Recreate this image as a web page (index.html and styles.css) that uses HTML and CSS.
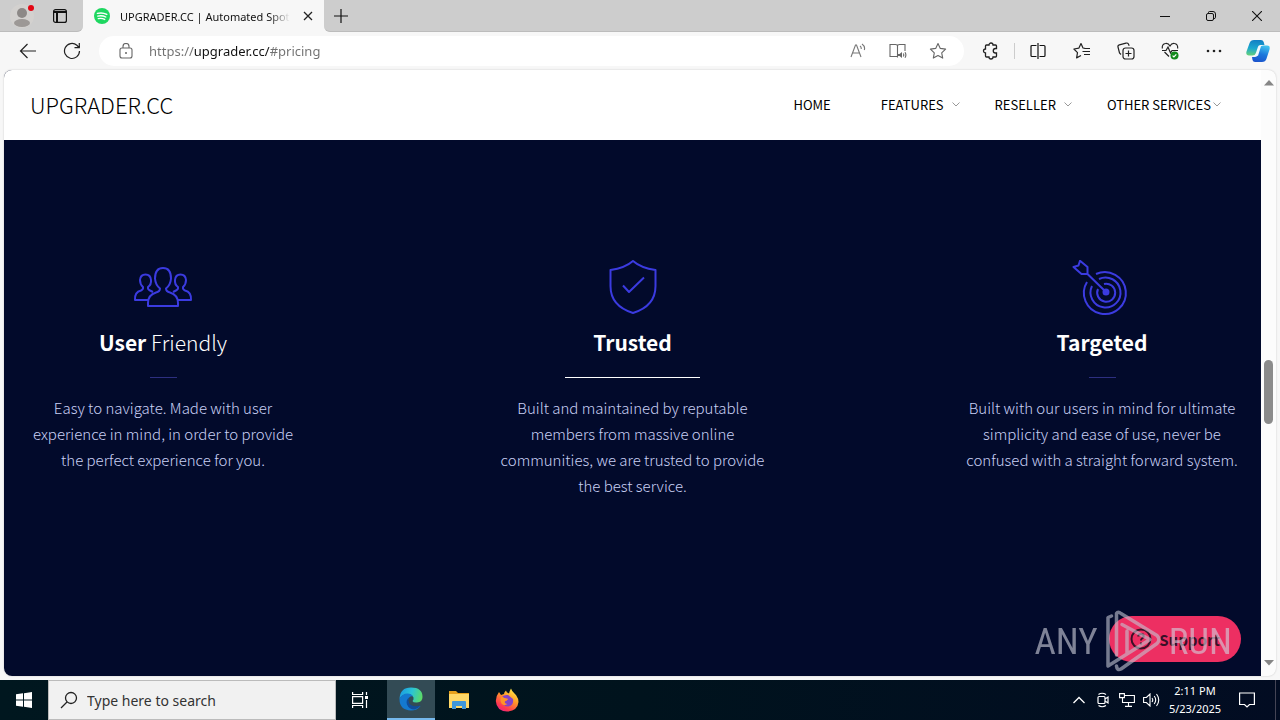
FILE: index.html
```html
<!DOCTYPE html>
<html lang="en">
<head>
  <meta charset="UTF-8">
  <meta name="viewport" content="width=device-width, initial-scale=1.0">
  <title>UPGRADER.CC | Automated Spotify Upgrades</title>
  <link rel="stylesheet" href="styles.css">
</head>
<body>

  <!-- Tab strip -->
  <div class="titlebar">
    <div class="titlebar-left">
      <button type="button" class="profile" aria-label="Profile">
        <svg width="28" height="28" viewBox="0 0 28 28">
          <circle cx="13" cy="14" r="12" fill="#d3d1cf"/>
          <circle cx="13" cy="11" r="5" fill="#8d8987"/>
          <ellipse cx="13" cy="21" rx="8" ry="4" fill="#9c9896"/>
          <circle cx="22" cy="6" r="3" fill="#e30613"/>
        </svg>
      </button>
      <button type="button" class="workspace" aria-label="Tab actions">
        <svg width="16" height="16" viewBox="0 0 16 16" fill="none" stroke="#111" stroke-width="1.2">
          <rect x="1.6" y="1.6" width="12.8" height="12.8" rx="2"/>
          <path d="M2 4h12M5 4v10" stroke-width="2"/>
        </svg>
      </button>
    </div>
    <div class="tab">
      <svg width="16" height="16" viewBox="0 0 16 16">
        <circle cx="8" cy="8" r="8" fill="#1ed760"/>
        <path d="M3.4 5.4q5-1.3 9.4 1M3.8 8.1q4.300-1 8 .9M4.300 10.600q3.500-.8 6.400.8" fill="none" stroke="#fff" stroke-width="1.400" stroke-linecap="round"/>
      </svg>
      <span class="tab-title">UPGRADER.CC | Automated Spot</span>
      <button type="button" class="tab-close" aria-label="Close tab">
        <svg width="10" height="10" viewBox="0 0 10 10" stroke="#222" stroke-width="1.300"><path d="M1 1l8 8M9 1l-8 8"/></svg>
      </button>
    </div>
    <button type="button" class="new-tab" aria-label="New tab">
      <svg width="14" height="14" viewBox="0 0 14 14" stroke="#111" stroke-width="1.200"><path d="M7 0v14M0 7h14"/></svg>
    </button>
    <div class="window-buttons">
      <button type="button" aria-label="Minimize"><svg width="10" height="10" viewBox="0 0 10 10" stroke="#111"><path d="M0 5.500h10"/></svg></button>
      <button type="button" aria-label="Restore">
        <svg width="10" height="10" viewBox="0 0 10 10" fill="none" stroke="#111">
          <rect x=".5" y="2.500" width="7" height="7" rx="1.500"/>
          <path d="M2.500 2V1.500q0-1 1-1H7Q9.500.5 9.500 3v3.500q0 1-1.500 1"/>
        </svg>
      </button>
      <button type="button" aria-label="Close"><svg width="10" height="10" viewBox="0 0 10 10" stroke="#111" stroke-width="1.100"><path d="M0 0l10 10M10 0L0 10"/></svg></button>
    </div>
  </div>

  <!-- Toolbar -->
  <div class="toolbar">
    <button type="button" aria-label="Back">
      <svg width="18" height="16" viewBox="0 0 18 16" fill="none" stroke="#222" stroke-width="1.200"><path d="M17 8H2M8.500 1L1.500 8l7 7"/></svg>
    </button>
    <button type="button" aria-label="Refresh">
      <svg width="18" height="18" viewBox="0 0 18 18" fill="none" stroke="#222" stroke-width="1.200"><path d="M16.500 9a7.500 7.500 0 1 1-2.600-5.700L16 5.500M16.300 1v4.700h-4.800"/></svg>
    </button>
    <div class="address">
      <svg width="14" height="16" viewBox="0 0 14 16" fill="none" stroke="#666" stroke-width="1.100">
        <rect x="1" y="5" width="12" height="10" rx="2"/>
        <path d="M4 5V3.500a3 3 0 0 1 6 0V5"/>
        <circle cx="7" cy="10" r="1" fill="#666" stroke="none"/>
      </svg>
      <input type="text" class="url" aria-label="Address" value="https://upgrader.cc/#pricing">
      <button type="button" aria-label="Read aloud">
        <svg width="16" height="16" viewBox="0 0 16 16" fill="none" stroke="#777" stroke-width="1.100"><path d="M1 14L5.500 2h1L11 14M2.700 10h6.600M10 3q1.500 1 1.200 3M12 1q3.500 2.500 2.300 6"/></svg>
      </button>
      <button type="button" aria-label="Immersive reader">
        <svg width="18" height="16" viewBox="0 0 18 16" fill="none" stroke="#666" stroke-width="1.100">
          <path d="M8.500 3v11.500M8 13.500H1v-12h5.500q2 0 2 1.500 0-1.500 2-1.500H16V8"/>
          <path d="M9 11h1.500L13 9v6l-2.500-2H9z" fill="#666" stroke="none"/>
          <path d="M14.300 10.500q1 1.500 0 3M16 9.300q1.800 2.700 0 5.400"/>
        </svg>
      </button>
      <button type="button" aria-label="Add to favorites">
        <svg width="18" height="18" viewBox="0 0 18 18" fill="none" stroke="#666" stroke-width="1.100" stroke-linejoin="round"><path d="M9 1.500l2.300 4.900 5.300.7-3.900 3.700 1 5.300L9 13.500l-4.700 2.600 1-5.300L1.400 7.100l5.300-.7z"/></svg>
      </button>
    </div>
    <button type="button" aria-label="Extensions">
      <svg width="18" height="18" viewBox="0 0 18 18" fill="none" stroke="#222" stroke-width="1.300"><path d="M4.500 3H7a2 2 0 0 1 4 0h2.500q1 0 1 1v2.500h-1a2 2 0 0 0 0 4.500h1v3q0 1-1 1H11a2 2 0 0 1-4 0H4.500q-1 0-1-1V11a2 2 0 0 1 0-4V4q0-1 1-1z"/></svg>
    </button>
    <span class="divider"></span>
    <button type="button" aria-label="Split screen">
      <svg width="16" height="16" viewBox="0 0 16 16" fill="none" stroke="#111" stroke-width="1.200"><path d="M6.500 2.500H2q-1 0-1 1v9q0 1 1 1h4.500M9.500 2.500H14q1 0 1 1v9q0 1-1 1H9.500M8 0v16"/></svg>
    </button>
    <button type="button" aria-label="Favorites">
      <svg width="18" height="18" viewBox="0 0 18 18" fill="none" stroke="#222" stroke-width="1.200" stroke-linejoin="round"><path d="M12 6.400L10 6 8 1.500 5.800 6.200.9 7l3.600 3.700-.9 5.200L8 13.500M11 6.500h6M9.500 9.500H17M11 12.500h6"/></svg>
    </button>
    <button type="button" aria-label="Collections">
      <svg width="18" height="18" viewBox="0 0 18 18" fill="none" stroke="#222" stroke-width="1.200"><rect x="6" y="6" width="11" height="11" rx="2.500"/><path d="M11.500 8.500v6M8.500 11.500h6M4 12.500L2.500 11 1 5q-.4-1.700 1.300-2.200L9 1.100q1.700-.4 2.400 1l.8 1.700"/></svg>
    </button>
    <button type="button" aria-label="Browser essentials">
      <svg width="18" height="18" viewBox="0 0 18 18" fill="none" stroke="#222" stroke-width="1.200">
        <path d="M1.300 6.500Q.8 2 4.500 1.500 7.300 1 9 4q1.700-3 4.500-2.500 3.500.5 3.200 5M3.500 10L8 14.500M1 8.500h4L7 5l2.500 6 1.500-2.500h6"/>
        <circle cx="13.500" cy="13.500" r="4" fill="#138a1c" stroke="none"/>
        <path d="M11.600 13.600l1.300 1.300 2.400-2.600" stroke="#fff"/>
      </svg>
    </button>
    <button type="button" aria-label="Settings and more">
      <svg width="16" height="4" viewBox="0 0 16 4" fill="#222"><circle cx="2" cy="2" r="1.300"/><circle cx="8" cy="2" r="1.300"/><circle cx="14" cy="2" r="1.300"/></svg>
    </button>
    <button type="button" aria-label="Copilot">
      <svg width="24" height="24" viewBox="0 0 24 24">
        <defs>
          <linearGradient id="copilotA" x1="0.500" y1="0" x2="0.400" y2="1"><stop offset="0" stop-color="#117fc4"/><stop offset=".55" stop-color="#1ba8cf"/><stop offset="1" stop-color="#63d07c"/></linearGradient>
          <linearGradient id="copilotB" x1="0.600" y1="0" x2="0.300" y2="1"><stop offset="0" stop-color="#3fc0ee"/><stop offset=".5" stop-color="#1b78dc"/><stop offset="1" stop-color="#1b53cc"/></linearGradient>
        </defs>
        <path d="M8 1h7q2 0 2.700 2l.8 3h-4q-2 0-2.600 2l-2 6q-.8 2.500-3.500 2.500H3q-3.500 0-2.500-4L3.600 4Q4.600 1 8 1z" fill="url(#copilotA)"/>
        <path d="M16 23H9q-2 0-2.500-2L6 18h3q2 0 2.600-2l2-7q.8-2.500 3.500-2.500H21q3.500 0 2.500 4L20.400 20q-1 3-4.400 3z" fill="url(#copilotB)"/>
        <path d="M13 7l2 .2-3 9.500-2.500.3z" fill="#eefaff"/>
      </svg>
    </button>
  </div>

  <!-- Web page -->
  <div class="viewport">
    <div class="page">
      <header class="site-header">
        <a href="#" class="logo">UPGRADER.CC</a>
        <nav>
          <a href="#" class="home">HOME</a>
          <a href="#">FEATURES <svg class="chevron" width="8" height="5" viewBox="0 0 8 5"><path d="M.5.500L4 4 7.500.500"/></svg></a>
          <a href="#">RESELLER <svg class="chevron" width="8" height="5" viewBox="0 0 8 5"><path d="M.5.500L4 4 7.500.500"/></svg></a>
          <a href="#" class="services">OTHER SERVICES <svg class="chevron" width="8" height="5" viewBox="0 0 8 5"><path d="M.5.500L4 4 7.500.500"/></svg></a>
        </nav>
      </header>

      <main class="features">
        <section class="feature">
          <svg class="feature-icon" width="60" height="60" viewBox="0 0 60 60">
            <path d="M15 46V43q0-8 8-10.500 4-1 4-4-4.500-3.500-5-10Q22 8 30 8t8 10.500q-.5 6.500-5 10 0 3 4 4 8 2.500 8 10.500v3z"/>
            <path d="M15 40H2q-.5-8 6-9.500Q10.500 29.500 10 27 7 24.500 7 20q.5-5.500 5.500-5.500T18 20q.5 4.500-3 7-.5 2.500 2 3.500l3 1.500M45 40h13q.5-8-6-9.500-2.500-1-2-3.500 3-2.500 3-7-.5-5.500-5.500-5.500T42 20q-.5 4.500 3 7 .5 2.500-2 3.500l-3 1.500"/>
          </svg>
          <h3>User <span>Friendly</span></h3>
          <hr>
          <p>Easy to navigate. Made with user experience in mind, in order to provide the perfect experience for you.</p>
        </section>

        <section class="feature">
          <svg class="feature-icon" width="60" height="60" viewBox="0 0 60 60">
            <path d="M30 1q8 7 22.500 9v16q0 20-22.500 27Q7.500 46 7.500 26V10Q22 8 30 1z"/>
            <path d="M20 25.500l6 6.500L41 17.500"/>
          </svg>
          <h3>Trusted</h3>
          <hr class="wide">
          <p>Built and maintained by reputable members from massive online communities, we are trusted to provide the best service.</p>
        </section>

        <section class="feature">
          <svg class="feature-icon" width="60" height="60" viewBox="0 0 60 60">
            <path d="M24 14A21 21 0 1 1 15 22M27 19A15 15 0 1 1 20 26M32 24A9 9 0 1 1 26 29"/>
            <circle cx="34" cy="32" r="2.500" fill="#3b3be0"/>
            <path d="M34 32L15.500 14M15.500 14L9.500 14 1.500 7l5-1.500L8 .8l7.500 6.200z"/>
          </svg>
          <h3>Targeted</h3>
          <hr>
          <p>Built with our users in mind for ultimate simplicity and ease of use, never be confused with a straight forward system.</p>
        </section>
      </main>

      <button type="button" class="support">
        <svg width="22" height="22" viewBox="0 0 22 22" fill="none" stroke="#3c1027" stroke-width="2">
          <circle cx="11" cy="11" r="9.500"/>
          <path d="M8.300 8.500q.2-2.500 2.700-2.500 2.700 0 2.700 2.200 0 1.300-1.700 2.300-1 .7-1 2M11 14.500v2"/>
        </svg>
        Support
      </button>
    </div>

    <div class="scrollbar">
      <svg width="10" height="6" viewBox="0 0 10 6"><path d="M5 0l5 5.500H0z" fill="#868686"/></svg>
      <div class="thumb"></div>
      <svg width="10" height="6" viewBox="0 0 10 6"><path d="M0 0h10L5 5.500z" fill="#868686"/></svg>
    </div>
  </div>

  <!-- Sandbox watermark -->
  <div class="watermark">
    <span>ANY</span>
    <svg width="57" height="64" viewBox="0 0 57 64" fill="none" stroke="#c3c6d3" stroke-width="3.500" stroke-linejoin="round" stroke-linecap="round">
      <path d="M11.500 46V4.500Q13 2 16 4.500L52 26.500Q56 30.500 52 34.500L16 60q-4 2-4.500-3"/>
      <path d="M17 15.500L45 30.500 3 57V8.500L6.500 7M22 22V44"/>
    </svg>
    <span>RUN</span>
  </div>

  <!-- Taskbar -->
  <footer class="taskbar">
    <button type="button" class="start" aria-label="Start">
      <svg width="16" height="16" viewBox="0 0 16 16" fill="#fff"><path d="M0 2.300L7 1.300V7.500H0zM8 1.200L16 0v7.500H8zM0 8.500h7v6.200l-7-1zM8 8.500h8V16l-8-1.200z"/></svg>
    </button>
    <label class="search">
      <svg width="18" height="18" viewBox="0 0 18 18" fill="none" stroke="#222" stroke-width="1.300"><circle cx="11" cy="7" r="5.500"/><path d="M7 11L1 17"/></svg>
      <input type="text" placeholder="Type here to search" aria-label="Type here to search">
    </label>
    <button type="button" class="app task-view" aria-label="Task view">
      <svg width="18" height="16" viewBox="0 0 18 16" fill="none" stroke="#fff" stroke-width="1.200"><path d="M1.600 0v2.500h10V0M1.600 16v-2.500h10V16M1.600 4.600h10v6.800h-10zM15.500 0v3M15.500 8v8"/><path d="M14 4h3v3h-3z" fill="#fff" stroke="none"/></svg>
    </button>
    <button type="button" class="app active" aria-label="Microsoft Edge">
      <svg width="24" height="24" viewBox="0 0 24 24">
        <defs>
          <linearGradient id="edgeTop" x1="0" y1="0.400" x2="1" y2="0.600"><stop offset="0" stop-color="#1b9de2"/><stop offset=".5" stop-color="#2bc4d4"/><stop offset="1" stop-color="#5edb63"/></linearGradient>
        </defs>
        <path d="M.500 12Q1 .500 12 .500 23.500.500 23.500 10q0 5-5.500 5.500-4 .2-4.500-1.500 1.500-1.500 1-3.500Q13 7 9 7 3 7 .500 12z" fill="url(#edgeTop)"/>
        <path d="M.500 12Q3 6.500 8.500 6.500q4 0 5.500 3-2-.8-3.800 1-2.200 2.500-.2 6.500 3 5 11.500 2Q18 23.500 12 23.500.500 23 .500 12z" fill="#1479cf"/>
        <path d="M10 10.500q-3.500 2.500-2 7 2 5 7.500 5 4-1 6-4-8 2.500-11.500-2.500-1.500-3 0-5.500z" fill="#114c9a"/>
      </svg>
    </button>
    <button type="button" class="app" aria-label="File Explorer">
      <svg width="22" height="20" viewBox="0 0 22 20">
        <path d="M1 1h7l2 2h11v5H1z" fill="#e7a11c"/>
        <path d="M1 4h20v14H1z" fill="#ffd867"/>
        <path d="M4 19v-7q0-1 1-1h12q1 0 1 1v7h-4v-3H8v3z" fill="#3f97da"/>
      </svg>
    </button>
    <button type="button" class="app" aria-label="Firefox">
      <svg width="24" height="24" viewBox="0 0 24 24">
        <defs>
          <linearGradient id="foxFlame" x1="0.800" y1="0" x2="0.200" y2="1"><stop offset="0" stop-color="#fff04a"/><stop offset=".4" stop-color="#ff9a28"/><stop offset=".8" stop-color="#ff3750"/><stop offset="1" stop-color="#e6228b"/></linearGradient>
        </defs>
        <path d="M4 4l2 3 3-1q0-2 2-3.500 0 2 3 3Q14.500 3 16 .500q1 3 3.500 5L21 7q2.500 3.500 2.500 7-1 9-11.500 9.500Q1.500 23 .800 13 .800 8 4 4z" fill="url(#foxFlame)"/>
        <path d="M7 9q2-2.500 6-2l5 4q1 6-4.500 7.500Q7.500 18.500 7 13l3 .5 3-2-3-1z" fill="#8342c8"/>
        <path d="M6.500 8.500l3 1.500 3.500.8q-.5 2-3 2.200-1 2.500 2.500 3-3.500 2.500-6-.5-2-3.500 0-7z" fill="#ff9328"/>
      </svg>
    </button>

    <div class="tray">
      <button type="button" aria-label="Show hidden icons"><svg width="12" height="8" viewBox="0 0 12 8" fill="none" stroke="#fff" stroke-width="1.300"><path d="M.500 7L6 1.500 11.500 7"/></svg></button>
      <button type="button" aria-label="Meet now"><svg width="14" height="16" viewBox="0 0 14 16" fill="none" stroke="#fff" stroke-width="1.200"><rect x="2" y="4.500" width="7" height="7" rx="1"/><path d="M9 7l3-2v6L9 9M2.500 2.500Q6 0 10 2.500M2.500 13.500Q6 16 10 13.500"/></svg></button>
      <button type="button" aria-label="Network"><svg width="16" height="14" viewBox="0 0 16 14" fill="none" stroke="#fff" stroke-width="1.100"><path d="M5 2.500h10.400v7H3.500V5M9.500 9.500v4M6 13.400h7M.600.600h4.800v4H.600zM3.500 4.600v5"/></svg></button>
      <button type="button" aria-label="Volume"><svg width="17" height="14" viewBox="0 0 17 14" fill="none" stroke="#fff" stroke-width="1.100"><path d="M.600 4.500h2.800L7 1v12L3.400 9.500H.600zM9 5q1.500 2 0 4M11.200 3q3 4 0 8M13.500 1q4.500 6 0 12"/></svg></button>
      <div class="clock"><span>2:11 PM</span><span>5/23/2025</span></div>
      <button type="button" class="notifications" aria-label="Notifications"><svg width="16" height="16" viewBox="0 0 16 16" fill="none" stroke="#fff" stroke-width="1.200"><path d="M.600 1h14.800v11.500H10.500L8 15l-2.500-2.500H.600z"/></svg></button>
    </div>
  </footer>

</body>
</html>
```
FILE: styles.css
```css
* {
  box-sizing: border-box;
}
body {
  margin: 0;
  height: 100vh;
  display: flex;
  flex-direction: column;
  overflow: hidden;
  background-color: #f7f7f7;
  font-family: "Noto Sans", "Open Sans", sans-serif;
  font-size: 11px;
  color: #111;
}
button {
  display: flex;
  align-items: center;
  justify-content: center;
  padding: 0;
  border: none;
  background: none;
  font-family: inherit;
  cursor: pointer;
}
input {
  border: none;
  outline: none;
  padding: 0;
  background: none;
  font-family: inherit;
}
a {
  color: inherit;
  text-decoration: none;
}
svg {
  flex-shrink: 0;
}

/* Tab strip */
.titlebar {
  display: flex;
  flex-shrink: 0;
  height: 32px;
  background-color: #f7f7f7;
}
.titlebar-left {
  display: flex;
  align-items: center;
  width: 83px;
  padding-left: 9px;
  gap: 15px;
  background-color: #cdcdcd;
  border-bottom: 1px solid #bcbcbc;
  border-bottom-right-radius: 6px;
}
.tab {
  display: flex;
  align-items: center;
  width: 241px;
  padding: 0 8px 0 11px;
  gap: 10px;
}
.tab-title {
  flex: 1;
  overflow: hidden;
  white-space: nowrap;
  -webkit-mask-image: linear-gradient(to right, #000 88%, transparent);
  mask-image: linear-gradient(to right, #000 88%, transparent);
}
.tab-close {
  width: 16px;
}
.new-tab {
  flex: 1;
  justify-content: flex-start;
  padding-left: 10px;
  background-color: #cdcdcd;
  border-bottom: 1px solid #bcbcbc;
  border-bottom-left-radius: 6px;
}
.window-buttons {
  display: flex;
  background-color: #cdcdcd;
  border-bottom: 1px solid #bcbcbc;
}
.window-buttons button {
  width: 46px;
}

/* Toolbar */
.toolbar {
  display: flex;
  align-items: center;
  flex-shrink: 0;
  height: 38px;
  padding-left: 6px;
}
.toolbar > button {
  width: 44px;
  height: 32px;
}
.address {
  flex: 1;
  display: flex;
  align-items: center;
  height: 30px;
  margin: 0 5px;
  padding: 0 6px 0 20px;
  border-radius: 15px;
  background-color: #fff;
}
.url {
  flex: 1;
  margin-left: 16px;
  font-size: 13px;
  color: transparent;
  background-image: linear-gradient(to right, #707070 45px, #111 45px, #111 121px, #707070 121px);
  -webkit-background-clip: text;
  background-clip: text;
}
.address button {
  width: 40px;
}
.divider {
  width: 1px;
  height: 16px;
  margin: 0 1px;
  background-color: #ccc;
}

/* Web page */
.viewport {
  flex: 1;
  display: flex;
  min-height: 0;
  margin: 0 4px 4px;
  border-radius: 8px;
  overflow: hidden;
  background-color: #fcfcfc;
  box-shadow: 0 0 2px rgba(0, 0, 0, 0.2);
}
.page {
  flex: 1;
  position: relative;
  display: flex;
  flex-direction: column;
  background-color: #020a2b;
  font-family: "Source Sans Pro", "Noto Sans CJK JP", sans-serif;
}
.site-header {
  display: flex;
  align-items: center;
  justify-content: space-between;
  height: 70px;
  padding: 0 40px 2px 26px;
  background-color: #fff;
}
.logo {
  font-size: 22px;
  font-weight: 300;
  color: #000;
}
nav {
  display: flex;
  align-items: center;
  gap: 35px;
  font-size: 13px;
  font-weight: 400;
  color: #000;
}
nav a {
  display: flex;
  align-items: center;
  gap: 8px;
}
nav .home {
  margin-right: 15px;
}
nav .services {
  gap: 2px;
}
.chevron {
  fill: none;
  stroke: #999;
}
.features {
  display: flex;
  justify-content: space-between;
  padding: 120px 19px 0;
}
.feature {
  width: 280px;
  display: flex;
  flex-direction: column;
  align-items: center;
  text-align: center;
}
.feature-icon {
  fill: none;
  stroke: #3b3be0;
  stroke-width: 2;
  stroke-linejoin: round;
}
.feature h3 {
  margin: 7px 0 0;
  font-size: 21px;
  font-weight: 700;
  line-height: 30px;
  color: #fff;
}
.feature h3 span {
  font-weight: 300;
}
.feature hr {
  width: 27px;
  height: 1px;
  margin: 20px 0 17px;
  border: none;
  background-color: #2d2f80;
}
.feature .wide {
  width: 135px;
  background-color: #fff;
}
.feature p {
  margin: 0;
  font-size: 15px;
  font-weight: 200;
  line-height: 26px;
  color: #c9d0f5;
}
.support {
  position: absolute;
  right: 20px;
  bottom: 14px;
  width: 132px;
  height: 46px;
  gap: 7px;
  border-radius: 23px;
  background-color: #ed2f62;
  color: #3c1027;
  font-size: 15px;
  font-weight: 700;
}
.scrollbar {
  display: flex;
  flex-direction: column;
  align-items: center;
  justify-content: space-between;
  width: 15px;
  padding: 10px 0;
}
.thumb {
  width: 9px;
  height: 64px;
  margin-top: 38px;
  border-radius: 5px;
  background-color: #8b8b8b;
}

/* Watermark over the lower right corner */
.watermark {
  position: absolute;
  right: 48px;
  bottom: 47px;
  display: flex;
  align-items: center;
  gap: 7px;
  opacity: 0.6;
  color: #d2d4df;
  font-family: "Roboto Condensed", "Liberation Sans Narrow", Roboto, sans-serif;
  font-size: 37px;
  pointer-events: none;
}

/* Taskbar */
.taskbar {
  display: flex;
  flex-shrink: 0;
  height: 40px;
  background: linear-gradient(to right, #00171f, #00131d 50%, #020c22);
}
.start {
  width: 48px;
}
.search {
  display: flex;
  align-items: center;
  width: 288px;
  padding-left: 11px;
  gap: 9px;
  background-color: #f1f1f1;
  border: 1px solid #bbb;
}
.search input {
  flex: 1;
  min-width: 0;
  font-size: 14px;
}
.search input::placeholder {
  color: #333;
}
.app {
  width: 48px;
}
.task-view {
  margin-right: 3px;
}
.active {
  background-color: #334b55;
  border-bottom: 2px solid #76b9ed;
}
.tray {
  display: flex;
  margin-left: auto;
  margin-right: 4px;
  padding-right: 8px;
  border-right: 1px solid #445;
  color: #fff;
}
.tray button {
  width: 24px;
}
.tray .notifications {
  width: 40px;
}
.clock {
  display: flex;
  flex-direction: column;
  justify-content: center;
  width: 64px;
  text-align: center;
  line-height: 18px;
}
```
